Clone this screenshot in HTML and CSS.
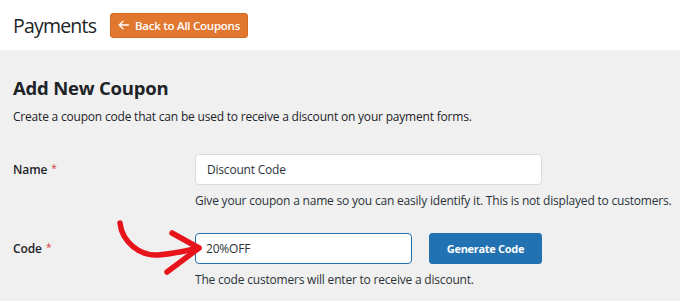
FILE: index.html
```html
<!DOCTYPE html>
<html lang="en">
<head>
<meta charset="utf-8">
<title>Payments - Add New Coupon</title>
<link rel="stylesheet" href="styles.css">
</head>
<body>
<header class="topbar">
  <h1 class="page-title">Payments</h1>
  <a class="back-btn" href="#"><svg class="back-arrow" width="11" height="10" viewBox="0 0 11 10" xmlns="http://www.w3.org/2000/svg"><path d="M10.5 5 H1.5 M5 1.2 L1.2 5 L5 8.8" fill="none" stroke="#fff" stroke-width="1.3" stroke-linecap="round" stroke-linejoin="round"/></svg>Back to All Coupons</a>
</header>
<main class="content">
  <h2 class="section-title">Add New Coupon</h2>
  <p class="section-desc">Create a coupon code that can be used to receive a discount on your payment forms.</p>
  <div class="form">
    <div class="row row-name">
      <label class="label">Name <span class="req">*</span></label>
      <div class="field">
        <div class="input input-name">Discount Code</div>
        <p class="help">Give your coupon a name so you can easily identify it. This is not displayed to customers.</p>
      </div>
    </div>
    <div class="row row-code">
      <label class="label">Code <span class="req">*</span></label>
      <div class="field">
        <div class="code-line">
          <div class="input input-code">20%OFF</div>
          <button class="gen-btn" type="button">Generate Code</button>
        </div>
        <p class="help">The code customers will enter to receive a discount.</p>
      </div>
    </div>
  </div>
  <svg class="annot-arrow" width="110" height="70" viewBox="0 0 110 70" xmlns="http://www.w3.org/2000/svg">
    <path d="M20 13 C 22 32, 40 46, 58 45 C 72 44, 86 41, 99 38" fill="none" stroke="#e8141b" stroke-width="5.5" stroke-linecap="round"/>
    <path d="M72 23 L99 38 L67 62" fill="none" stroke="#e8141b" stroke-width="5.5" stroke-linecap="round" stroke-linejoin="round"/>
  </svg>
</main>
</body>
</html>
```
FILE: styles.css
```css
* { box-sizing: border-box; }
html, body {
  margin: 0;
  padding: 0;
  background: #f0f0f1;
  font-family: "Open Sans", "Noto Sans", "Liberation Sans", sans-serif;
  color: #1d2327;
  width: 680px;
  height: 301px;
  overflow: hidden;
}
.topbar {
  height: 50px;
  background: #ffffff;
  display: flex;
  align-items: center;
  padding-left: 13px;
}
.page-title {
  margin: 0;
  width: 97px;
  font-size: 19.5px;
  font-weight: 400;
  color: #1d2327;
  letter-spacing: -0.8px;
}
.back-btn {
  display: flex;
  align-items: center;
  justify-content: center;
  gap: 6px;
  width: 138px;
  height: 25px;
  background: #e27730;
  border: 1px solid #d26a25;
  border-radius: 3px;
  color: #fff;
  font-size: 11.5px;
  font-weight: 600;
  letter-spacing: -0.25px;
  text-decoration: none;
}
.back-arrow { display: block; flex: none; }
.content {
  position: relative;
  padding: 25px 13px 0 13px;
}
.section-title {
  margin: 0;
  font-size: 18.5px;
  font-weight: 700;
  line-height: 26px;
  color: #1d2327;
  letter-spacing: -0.2px;
}
.section-desc {
  margin: 5px 0 0 0;
  font-size: 12px;
  line-height: 22px;
  color: #1d2327;
  letter-spacing: -0.2px;
}
.form {
  margin-top: 26px;
  display: flex;
  flex-direction: column;
  gap: 23px;
}
.row {
  display: grid;
  grid-template-columns: 182px 1fr;
}
.label {
  font-size: 12px;
  font-weight: 600;
  height: 31px;
  display: flex;
  align-items: center;
  gap: 4px;
  letter-spacing: -0.1px;
}
.req {
  color: #d63638;
  font-weight: 400;
  font-size: 10px;
  margin-top: -4px;
}
.input {
  height: 31px;
  background: #fff;
  border-radius: 4px;
  display: flex;
  align-items: center;
  padding-left: 11px;
  font-size: 12px;
  letter-spacing: -0.2px;
  color: #2c3338;
}
.input-name {
  width: 347px;
  border: 1px solid #dcdcde;
}
.input-code {
  width: 217px;
  border: 1.5px solid #2271b1;
  padding-left: 10px;
}
.code-line {
  display: flex;
  gap: 17px;
}
.gen-btn {
  width: 113px;
  height: 31px;
  background: #2271b1;
  border: 1px solid #2271b1;
  border-radius: 3px;
  color: #fff;
  font-family: inherit;
  font-size: 11px;
  font-weight: 700;
  letter-spacing: -0.3px;
  padding: 0;
}
.help {
  margin: 7px 0 0 0;
  font-size: 12px;
  line-height: 18px;
  color: #2c3338;
  letter-spacing: -0.2px;
  white-space: nowrap;
}
.annot-arrow {
  position: absolute;
  left: 100px;
  top: 160px;
}
```
